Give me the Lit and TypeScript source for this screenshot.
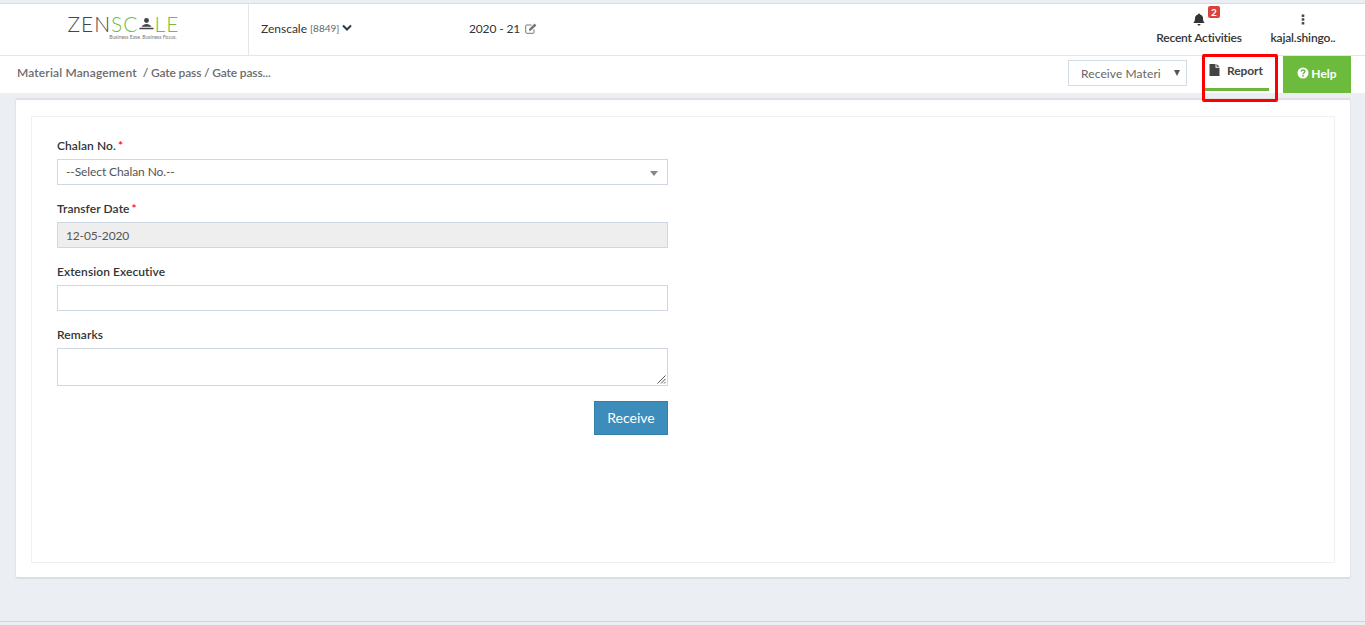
import { LitElement, html, css } from "lit";
import { customElement } from "lit/decorators.js";

@customElement("app-root")
export class AppRoot extends LitElement {
  static styles = css`
    :host { display: block; width: 1365px; height: 625px; background: #ebeef3; font-family: Lato, "Liberation Sans", sans-serif; color: #333; overflow: hidden; position: relative; box-sizing: border-box; }
    * { box-sizing: border-box; }
    .header { background: #fff; border-top: 1px solid #dcdcdc; margin-top: 3px; height: 53px; border-bottom: 1px solid #e6e6e6; display: flex; align-items: stretch; }
    .logo-cell { width: 249px; flex: none; border-right: 1px solid #e6e6e6; display: flex; flex-direction: column; align-items: center; padding: 9px 0 0 0; }
    .logo { display: flex; align-items: center; font-family: Lato, sans-serif; font-weight: 300; font-size: 21px; line-height: 22px; letter-spacing: 1px; color: #444; width: 110px; height: 22px; margin-left: -3px; white-space: nowrap; }
    .logo .g { color: #6fbe3c; }
    .logo svg { width: 15px; height: 14px; margin: 0 1px 0 0; flex: none; }
    .tagline { font-size: 5px; line-height: 6px; color: #777; margin: -1px 0 0 38px; white-space: nowrap; }
    .org { margin-left: 12px; width: 208px; flex: none; display: flex; align-items: center; font-size: 12px; color: #333; gap: 3px; padding-bottom: 3px; }
    .org small { font-size: 10px; color: #666; }
    .year { display: flex; align-items: center; gap: 5px; font-size: 12px; letter-spacing: -0.15px; color: #333; padding-bottom: 3px; }
    .spacer { flex: 1; }
    .hitem { display: flex; flex-direction: column; align-items: center; flex: none; white-space: nowrap; font-size: 12px; font-weight: 600; letter-spacing: -0.18px; color: #333; padding-top: 8px; gap: 3px; }
    .activities { width: 84px; margin-right: 29px; }
    .user { width: 66px; margin-right: 29px; }
    .hicon { height: 15px; display: flex; align-items: center; justify-content: center; position: relative; }
    .badge { position: absolute; left: 15px; top: -6px; background: #d9433a; color: #fff; font-size: 10px; font-weight: 700; line-height: 12px; width: 12px; text-align: center; border-radius: 2px; letter-spacing: 0; }
    .subbar { height: 37px; background: #fff; display: flex; align-items: flex-start; padding: 0 14px 0 17px; }
    .crumbs { font-size: 12px; font-weight: 600; color: #6b6b6b; padding-top: 9px; white-space: pre; letter-spacing: -0.15px; }
    .crumbs b { font-weight: 600; letter-spacing: 0.15px; margin-right: 6px; }
    .picker { margin-top: 4px; width: 119px; height: 26px; border: 1px solid #d5dbe5; background: #fff; display: flex; align-items: center; justify-content: space-between; padding: 0 6px 0 12px; font-size: 12px; color: #666; letter-spacing: 0.1px; }
    .arrow { width: 0; height: 0; border-left: 3.5px solid transparent; border-right: 3.5px solid transparent; border-top: 6px solid #555; }
    .report { margin-left: 18px; width: 64px; height: 35px; flex: none; border-bottom: 3px solid #6cb63e; display: flex; align-items: center; gap: 7px; padding: 0 0 4px 4px; font-size: 12px; font-weight: 700; letter-spacing: -0.1px; color: #444; white-space: nowrap; }
    .help { margin-left: 14px; width: 68px; height: 37px; flex: none; background: #6cbb3c; color: #fff; display: flex; align-items: center; justify-content: center; gap: 2px; font-size: 12px; font-weight: 700; padding-bottom: 3px; }
    .redbox { position: absolute; left: 1202px; top: 54px; width: 76px; height: 48px; border: 3px solid #f00; border-radius: 2px; }
    .band { height: 5px; }
    .card { margin: 0 14px 0 15px; height: 481px; background: #fff; border-radius: 3px; border: 1px solid #e2e4e8; border-top: 2px solid #dfe0e3; border-bottom: 2px solid #dcdee2; padding: 16px 15px 15px; }
    .inner { height: 447px; border: 1px solid #f0f0f0; padding: 21px 25px; }
    .form { width: 611px; display: flex; flex-direction: column; }
    .field { display: flex; flex-direction: column; height: 63px; }
    .field.tall { height: 75px; }
    label { font-size: 12px; font-weight: 600; line-height: 15px; letter-spacing: 0.08px; color: #333; height: 21px; }
    label i { color: #f00; font-style: normal; margin-left: -1px; }
    .ctl { height: 26px; border: 1px solid #cfd7e3; background: #fff; display: flex; align-items: center; padding: 0 8px; font-size: 12px; color: #555; }
    .ctl.sel { justify-content: space-between; padding-right: 9px; padding-bottom: 2px; letter-spacing: -0.1px; }
    .ctl.sel .arrow { border-top-color: #888; border-left-width: 4px; border-right-width: 4px; border-top-width: 5px; margin-top: 5px; }
    .ctl.dis { background: #eee; letter-spacing: -0.15px; }
    .ctl.area { height: 38px; position: relative; }
    .grip { position: absolute; right: 1px; bottom: 1px; }
    .actions { display: flex; justify-content: flex-end; margin-top: -1px; }
    .btn { width: 74px; height: 34px; background: #3c8dbc; border: 1px solid #367fa9; color: #fff; font-size: 14px; font-family: inherit; display: flex; align-items: center; justify-content: center; padding-bottom: 2px; }
    .foot { position: absolute; left: 0; right: 0; top: 621px; height: 1px; background: #d2d6de; }
  `;

  render() {
    return html`
      <div class="header">
        <div class="logo-cell">
          <div class="logo"><span>ZEN</span><span class="g">SC</span><svg viewBox="0 0 16 14"><circle cx="8" cy="3.2" r="2.6" fill="#444"/><path d="M3 9 Q8 5 13 9 V10 H3Z" fill="#444"/><rect x="0.5" y="11" width="15" height="1.6" fill="#444"/></svg><span class="g">LE</span></div>
          <div class="tagline">Business Ease. Business Focus.</div>
        </div>
        <div class="org">Zenscale <small>[8849]</small>
          <svg width="10" height="8" viewBox="0 0 10 8"><path d="M1 1.5 5 5.5 9 1.5" fill="none" stroke="#2f3a46" stroke-width="2"/></svg>
        </div>
        <div class="year">2020 - 21
          <svg width="12" height="11" viewBox="0 0 12 11"><path d="M9 6.5V9.3A1 1 0 0 1 8 10.3H1.7A1 1 0 0 1 .7 9.3V3A1 1 0 0 1 1.7 2H6.5" fill="none" stroke="#777" stroke-width="1"/><path d="M4 6 9.6 .6 11.4 2.4 5.8 7.8H4Z" fill="#777"/></svg>
        </div>
        <div class="spacer"></div>
        <div class="hitem activities">
          <div class="hicon">
            <svg width="12" height="13" viewBox="0 0 12 13"><path d="M6 .5a1 1 0 0 1 1 1c2 .4 3 2 3 4 0 2.500.8 3.500 1.700 4.500H.3C1.200 9 2 8 2 5.500c0-2 1-3.600 3-4a1 1 0 0 1 1-1ZM4.500 11h3a1.500 1.500 0 0 1-3 0Z" fill="#333"/></svg>
            <span class="badge">2</span>
          </div>
          <span>Recent Activities</span>
        </div>
        <div class="hitem user">
          <div class="hicon"><svg width="4" height="11" viewBox="0 0 4 11"><rect x=".7" y=".5" width="2.600" height="2.400" fill="#444"/><rect x=".7" y="4.300" width="2.600" height="2.400" fill="#444"/><rect x=".7" y="8.100" width="2.600" height="2.400" fill="#444"/></svg></div>
          <span>kajal.shingo..</span>
        </div>
      </div>
      <div class="subbar">
        <div class="crumbs"><b>Material Management</b>/ Gate pass / Gate pass...</div>
        <div class="spacer"></div>
        <div class="picker"><span>Receive Materi</span><span class="arrow"></span></div>
        <div class="report">
          <svg width="11" height="12" viewBox="0 0 11 12"><path d="M.5 0H6.500V3.700H10.500V12H.5Z" fill="#444"/><path d="M7.500 0 10.500 2.800H7.500Z" fill="#444"/></svg>
          Report
        </div>
        <div class="help">
          <svg width="12" height="12" viewBox="0 0 12 12"><circle cx="6" cy="6" r="5.500" fill="#fff"/><path d="M4.200 4.700C4.300 3.600 5 3 6 3s1.900.6 1.900 1.600C7.900 5.900 6 5.800 6 7.200" fill="none" stroke="#6cbb3c" stroke-width="1.400"/><rect x="5.200" y="8" width="1.600" height="1.500" fill="#6cbb3c"/></svg>
          Help
        </div>
      </div>
      <div class="band"></div>
      <div class="card">
        <div class="inner">
          <div class="form">
            <div class="field"><label>Chalan No. <i>*</i></label><div class="ctl sel"><span>--Select Chalan No.--</span><span class="arrow"></span></div></div>
            <div class="field"><label>Transfer Date <i>*</i></label><div class="ctl dis">12-05-2020</div></div>
            <div class="field"><label>Extension Executive</label><div class="ctl"></div></div>
            <div class="field tall"><label>Remarks</label><div class="ctl area">
              <svg class="grip" width="9" height="9" viewBox="0 0 9 9"><path d="M8.500 .5 .5 8.500M8.500 4 4 8.500M8.500 7 7 8.500" stroke="#555" stroke-width="1"/></svg>
            </div></div>
            <div class="actions"><button class="btn">Receive</button></div>
          </div>
        </div>
      </div>
      <div class="redbox"></div>
      <div class="foot"></div>
    `;
  }
}
